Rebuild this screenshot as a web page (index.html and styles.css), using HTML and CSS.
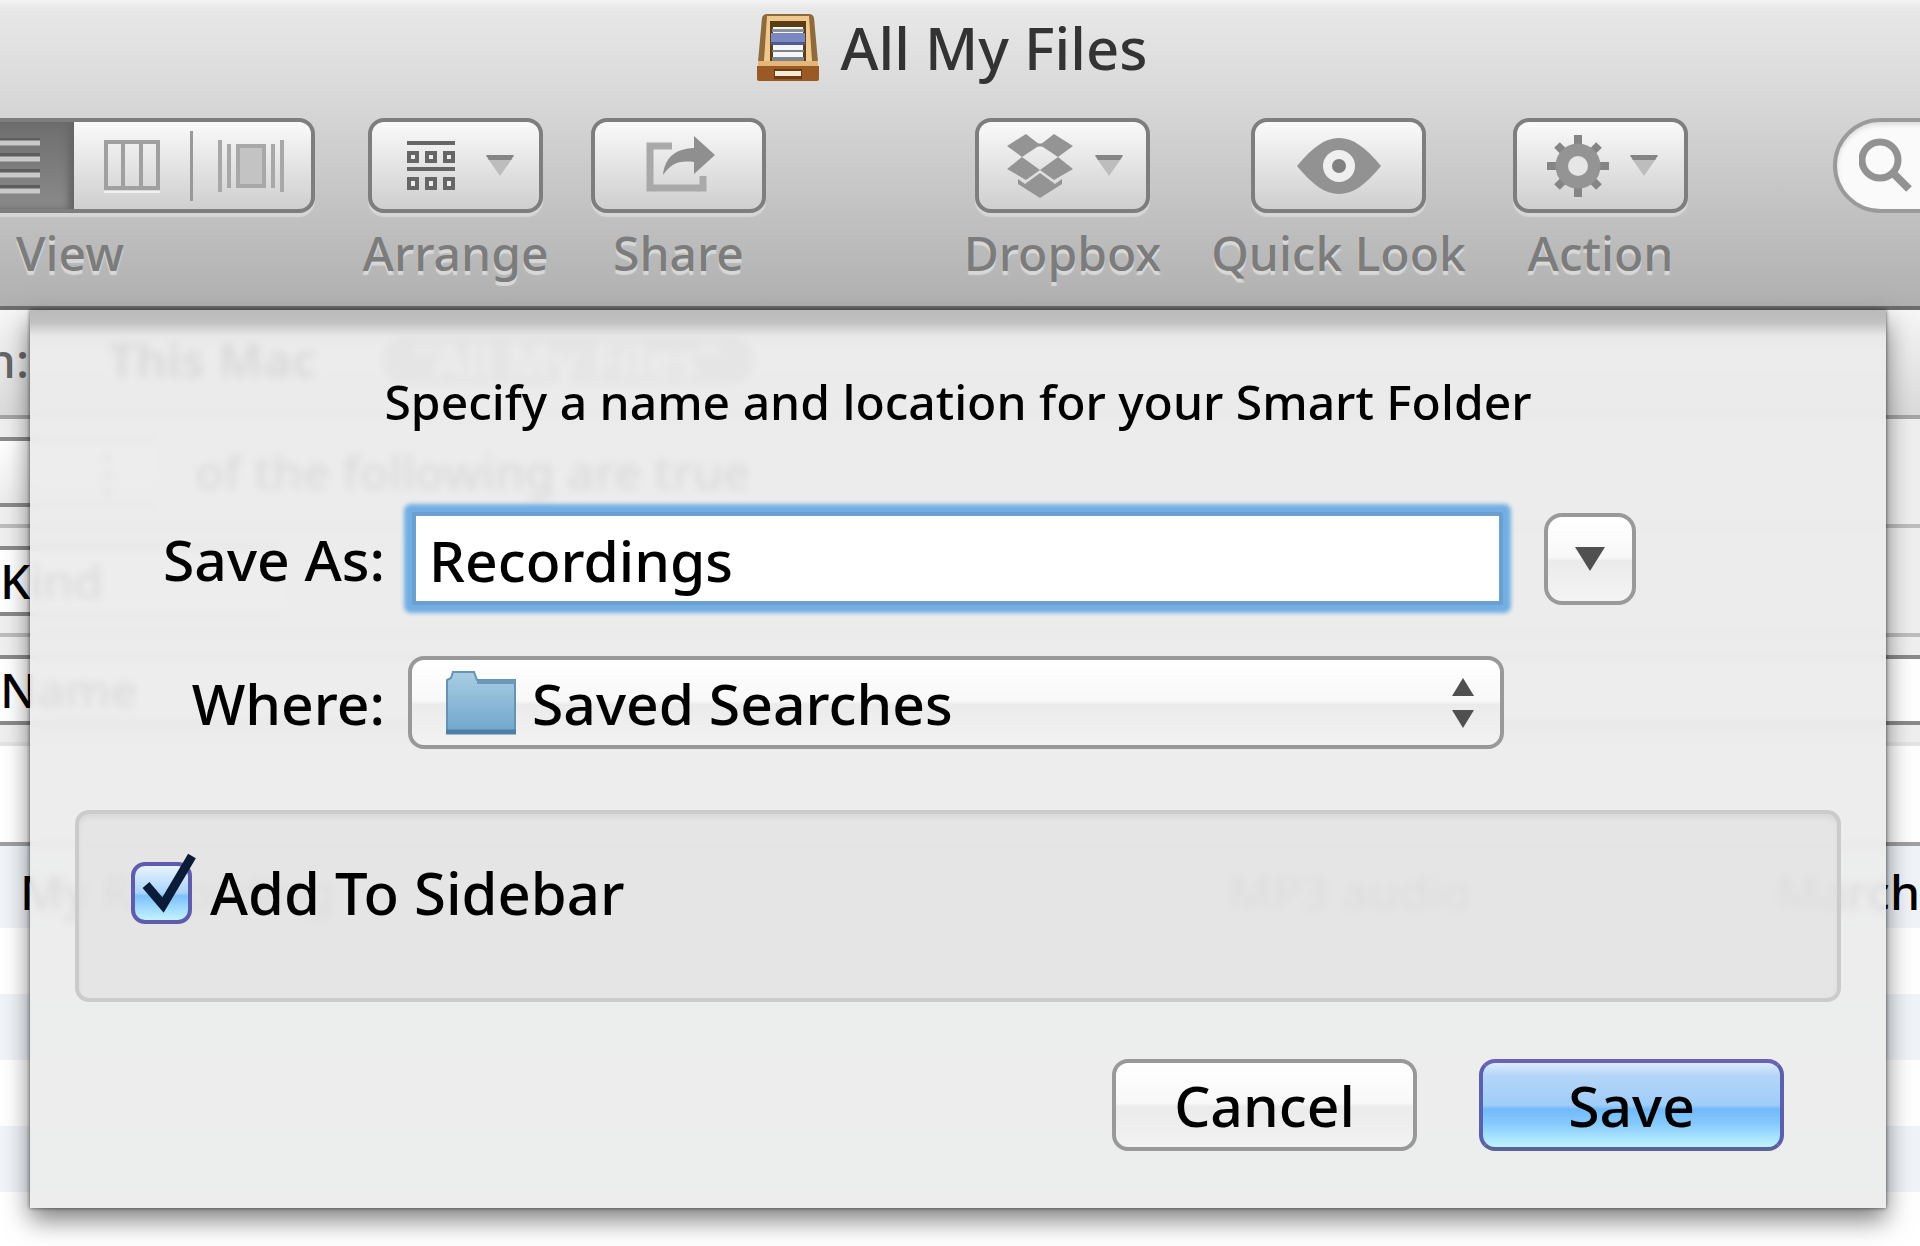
FILE: index.html
```html
<!DOCTYPE html>
<html lang="en">
<head>
<meta charset="utf-8">
<title>All My Files</title>
<link rel="stylesheet" href="styles.css">
</head>
<body>
<div class="window">
  <header class="header">
    <h1 class="title">
      <svg class="title-icon" width="62" height="68" viewBox="0 0 62 68" aria-hidden="true">
        <path d="M5 4Q6 0 10 0H52Q56 0 57 4L61 48H1Z" fill="#8f6a3c"/>
        <path d="M10 2H52L55 47H7Z" fill="#eec88c"/>
        <path d="M13 7H49V50H13Z" fill="#5c3d16"/>
        <path d="M16 13H46V47H16Z" fill="#f4f6f8"/>
        <path d="M15 15H47V18H15Z" fill="#8a9098"/>
        <path d="M14 19H48V28H14Z" fill="#7b87c0"/>
        <path d="M14 28H48V31H14Z" fill="#4f5b8c"/>
        <path d="M15 36H47V38H15ZM15 43H47V47H15Z" fill="#7d848c"/>
        <path d="M1 47H61V53H1Z" fill="#e5b777"/>
        <path d="M0 52H62V65Q62 67 60 67H2Q0 67 0 65Z" fill="#9a5a25"/>
        <path d="M17 55H45V65H17Z" fill="#6b3c12"/>
        <path d="M18 57H44V62H18Z" fill="#f5ead8"/>
      </svg>
      <span>All My Files</span>
    </h1>
    <div class="toolbar" role="toolbar" aria-label="Finder">
      <div class="tool tool-view">
        <div class="segments">
          <button class="segment" type="button" aria-label="Icons"></button>
          <button class="segment segment-on" type="button" aria-label="List">
            <svg width="56" height="56" viewBox="0 0 56 56"><path d="M0 1H56M0 17H56M0 33H56M0 49H56" stroke="#5e5e5e" stroke-width="4"/><path d="M0 5H56M0 21H56M0 37H56M0 53H56" stroke="#c9c9c9" stroke-width="5"/></svg>
          </button>
          <button class="segment segment-columns" type="button" aria-label="Columns">
            <svg width="58" height="56" viewBox="0 0 58 56"><path d="M3 4H55V50H3ZM20 4V50M38 4V50" fill="none" stroke="#a0a0a0" stroke-width="4"/><path d="M1 54H57" stroke="#f2f2f2" stroke-width="2"/></svg>
          </button>
          <button class="segment segment-ruled" type="button" aria-label="Cover Flow">
            <svg width="68" height="56" viewBox="0 0 68 56"><path d="M3 2V54M12 6V50M56 6V50M65 2V54" stroke="#a8a8a8" stroke-width="4"/><path d="M21 8H47V48H21Z" fill="#c3c3c3" stroke="#a8a8a8" stroke-width="4"/></svg>
          </button>
        </div>
        <span class="tool-label">View</span>
      </div>
      <div class="tool tool-arrange">
        <button class="tool-button" type="button" aria-label="Arrange">
          <svg width="48" height="52" viewBox="0 0 48 52"><path d="M0 3H48M0 29H48" stroke="#666" stroke-width="4"/><path d="M2 13H10V21H2ZM20 13H28V21H20ZM38 13H46V21H38ZM2 39H10V48H2ZM20 39H28V48H20ZM38 39H46V48H38Z" fill="#eee" stroke="#666" stroke-width="4"/></svg>
          <svg class="caret" width="30" height="24" viewBox="0 0 30 24"><path d="M1 2H29L15 22Z" fill="#bdbdbd"/><path d="M1 1H29L26 6H4Z" fill="#858585"/></svg>
        </button>
        <span class="tool-label">Arrange</span>
      </div>
      <div class="tool tool-share">
        <button class="tool-button" type="button" aria-label="Share">
          <svg width="74" height="60" viewBox="0 0 74 60"><path d="M30 10H8V52H61V40" fill="none" stroke="#a9a9a9" stroke-width="7"/><path d="M21 39C23 22 32 13 52 12V0L73 19L52 38V26C36 24 29 28 21 39Z" fill="#8f8f8f"/></svg>
        </button>
        <span class="tool-label">Share</span>
      </div>
      <div class="tool tool-dropbox">
        <button class="tool-button" type="button" aria-label="Dropbox">
          <svg width="68" height="66" viewBox="0 0 68 66"><path d="M20 1L34 12L16 24L1 13ZM48 1L67 13L52 24L34 12ZM16 24L34 37L20 47L1 36ZM52 24L67 36L48 47L34 37ZM34 40L49 51L56 46V51L34 65L12 51V46L19 51Z" fill="#949494"/><path d="M26 12H42" stroke="#949494" stroke-width="3"/></svg>
          <svg class="caret" width="30" height="24" viewBox="0 0 30 24"><path d="M1 2H29L15 22Z" fill="#bdbdbd"/><path d="M1 1H29L26 6H4Z" fill="#858585"/></svg>
        </button>
        <span class="tool-label">Dropbox</span>
      </div>
      <div class="tool tool-look">
        <button class="tool-button" type="button" aria-label="Quick Look">
          <svg width="84" height="56" viewBox="0 0 84 56"><path d="M0 28C16 9 28 0 42 0S68 9 84 28C68 47 56 56 42 56S16 47 0 28Z" fill="#929292"/><circle cx="42" cy="28" r="16" fill="#efefef"/><circle cx="42" cy="28" r="7" fill="#808080"/></svg>
        </button>
        <span class="tool-label">Quick Look</span>
      </div>
      <div class="tool tool-action">
        <button class="tool-button" type="button" aria-label="Action">
          <svg width="62" height="62" viewBox="-31 -31 62 62"><path d="M0 -31V31M-31 0H31M-21 -21L21 21M-21 21L21 -21" stroke="#858585" stroke-width="8"/><circle r="16" fill="none" stroke="#949494" stroke-width="13"/><circle r="10" fill="#e6e6e6"/></svg>
          <svg class="caret" width="30" height="24" viewBox="0 0 30 24"><path d="M1 2H29L15 22Z" fill="#bdbdbd"/><path d="M1 1H29L26 6H4Z" fill="#858585"/></svg>
        </button>
        <span class="tool-label">Action</span>
      </div>
      <label class="search">
        <svg width="56" height="56" viewBox="0 0 56 56" aria-hidden="true"><circle cx="21" cy="22" r="18" fill="none" stroke="#929292" stroke-width="7"/><path d="M34 35L50 51" stroke="#929292" stroke-width="8"/></svg>
        <input class="search-input" type="search" aria-label="Search">
      </label>
    </div>
  </header>

  <main class="content">
    <div class="browser">
      <div class="scope"><span class="scope-label">Search:</span><b>This Mac</b><span class="scope-pill">“All My Files”</span></div>
      <div class="rule"><span class="field field-any"><span>⋮</span></span><span>of the following are true</span></div>
      <div class="rule"><span class="field">Kind</span></div>
      <div class="rule rule-last"><span class="field field-wide">Name</span></div>
      <div class="columns"></div>
      <div class="row row-file"><span class="cell-name">My Recording</span><span class="cell-kind">MP3 audio</span><span class="cell-date">March</span></div>
      <div class="row"></div>
      <div class="row row-tint"></div>
      <div class="row"></div>
      <div class="row row-tint"></div>
    </div>

    <form class="sheet">
      <p class="prompt">Specify a name and location for your Smart Folder</p>
      <div class="fields">
        <label class="field-label" for="name">Save As:</label>
        <input class="name" id="name" type="text" value="Recordings">
        <button class="expand" type="button" aria-label="Show more locations">
          <svg width="32" height="24" viewBox="0 0 32 24"><path d="M1 0H31L16 24Z" fill="#505050"/></svg>
        </button>
        <label class="field-label" for="where">Where:</label>
        <div class="where">
          <svg class="folder" width="70" height="64" viewBox="0 0 70 64" aria-hidden="true">
            <defs><linearGradient id="folder" x1="0" y1="0" x2="0" y2="1"><stop offset="0" stop-color="#a9cde3"/><stop offset="1" stop-color="#70a6cb"/></linearGradient></defs>
            <path d="M1 62V9L5 7L7 1H28L31 9H69V62Z" fill="url(#folder)" stroke="#6593b3" stroke-width="2"/>
            <path d="M31 11H69" stroke="#6a98b8" stroke-width="4"/>
            <path d="M0 61H70" stroke="#4d7fa6" stroke-width="5"/>
          </svg>
          <select class="where-select" id="where"><option>Saved Searches</option></select>
          <svg class="updown" width="24" height="50" viewBox="0 0 24 50" aria-hidden="true"><path d="M12 0L23 18H1ZM12 50L1 32H23Z" fill="#505050"/></svg>
        </div>
      </div>
      <div class="options">
        <label class="check">
          <input class="check-box" type="checkbox" checked>
          <svg class="check-mark" width="56" height="60" viewBox="0 0 56 60" aria-hidden="true"><path d="M5 32L22 52L51 3" fill="none" stroke="#0b1c38" stroke-width="9"/></svg>
          <span>Add To Sidebar</span>
        </label>
      </div>
      <div class="actions">
        <button class="push" type="button">Cancel</button>
        <button class="push push-default" type="submit">Save</button>
      </div>
    </form>
  </main>
</div>
</body>
</html>
```
FILE: styles.css
```css
* { box-sizing: border-box; }

body {
  margin: 0;
  background: #fff;
  color: #000;
  font-family: "Noto Sans", "Open Sans", sans-serif;
  font-size: 48px;
  font-weight: 500;
  overflow: hidden;
}

button, input, select {
  font: inherit;
  color: inherit;
  margin: 0;
  padding: 0;
}

svg { display: block; flex: none; }

.window {
  display: flex;
  flex-direction: column;
  min-height: 100vh;
}

/* Title bar and toolbar */
.header {
  background: linear-gradient(#f4f4f4 0, #e8e8e8 8px, #d6d6d6 110px, #c2c2c2 210px, #b0b0b0 100%);
  border-bottom: 4px solid #6c6c6c;
  overflow: hidden;
}

.title {
  display: flex;
  justify-content: center;
  align-items: center;
  gap: 22px;
  height: 96px;
  margin: 0;
  padding-right: 16px;
  color: #333;
  font-size: 58px;
  font-weight: 500;
  line-height: 64px;
}

.toolbar {
  display: flex;
  align-items: flex-start;
  padding-top: 22px;
  height: 210px;
}

.tool {
  display: flex;
  flex: none;
  flex-direction: column;
  align-items: center;
  width: 175px;
}

.tool-view { width: 490px; margin-left: -175px; }
.tool-arrange { margin-left: 53px; }
.tool-share { margin-left: 48px; }
.tool-dropbox { margin-left: auto; }
.tool-look { margin-left: 101px; }
.tool-action { margin-left: 87px; }

.tool-label {
  margin-top: 10px;
  color: #7c7c7c;
  line-height: 60px;
  text-shadow: 0 4px 1px #d8d8d8;
  white-space: nowrap;
}

.segments, .tool-button {
  display: flex;
  width: 100%;
  height: 95px;
  border: 4px solid #7e7e7e;
  border-radius: 16px;
  background: linear-gradient(#fafafa, #e6e6e6 45%, #cfcfcf);
  box-shadow: 0 4px 1px #d6d6d6;
}

.tool-button {
  align-items: center;
  justify-content: center;
  gap: 30px;
}

.tool-button .caret { margin-right: -10px; }
.tool-dropbox .tool-button, .tool-action .tool-button { gap: 20px; }
.tool-dropbox .caret, .tool-action .caret { margin-right: -4px; }

.segments { overflow: hidden; }

.segment {
  display: flex;
  flex: 1;
  align-items: center;
  justify-content: center;
  border: 0;
  background: none;
}

.segment-on {
  flex: 0 0 127px;
  justify-content: flex-end;
  padding-right: 34px;
  background: linear-gradient(#6e6e6e, #8a8a8a);
  box-shadow: inset -6px 0 6px #666;
}

.segment-columns { flex: 0 0 116px; }

.segment-ruled {
  flex: 0 0 121px;
  background: linear-gradient(#999, #999) left center / 3px 70px no-repeat;
}

.search {
  display: flex;
  flex: none;
  align-items: center;
  width: 320px;
  height: 95px;
  margin-left: 145px;
  margin-right: -233px;
  padding-left: 22px;
  border: 4px solid #9a9a9a;
  border-radius: 48px;
  background: #fafafa;
  box-shadow: inset 0 3px 4px #ddd;
}

.search-input {
  width: 200px;
  border: 0;
  background: none;
}

/* Search criteria and file list behind the sheet */
.content {
  position: relative;
  flex: 1;
}

.browser { overflow: hidden; white-space: nowrap; }

.scope {
  display: flex;
  align-items: center;
  height: 109px;
  padding-bottom: 6px;
  border-bottom: 4px solid #a4a4a4;
  background: linear-gradient(#f6f6f6, #dadada);
}

.scope-label {
  display: flex;
  justify-content: flex-end;
  width: 29px;
  margin-right: 79px;
  color: #666;
}

.scope-pill {
  min-width: 370px;
  margin-left: 66px;
  border-radius: 24px;
  background: #888;
  color: #eee;
  font-weight: 700;
  line-height: 48px;
  text-align: center;
}

.rule {
  display: flex;
  align-items: center;
  height: 109px;
  border-bottom: 4px solid #bdbdbd;
  background: #efefef;
}

.rule-last { border-bottom-color: #e4e4e4; }

.field {
  display: flex;
  align-items: center;
  width: 280px;
  height: 70px;
  border: solid #8a8a8a;
  border-width: 4px 0;
  background: #fff;
}

.field-any {
  justify-content: flex-end;
  width: 155px;
  margin-right: 40px;
  padding-right: 24px;
  background: linear-gradient(#fff, #ececec);
}

.field-wide { width: 100%; }

.columns { height: 100px; border-bottom: 4px solid #a0a0a0; }

.row { display: flex; align-items: center; height: 66px; }
.row-tint { background: #f0f4f9; }
.row-file { height: 82px; padding: 8px 0 0 20px; background: #f0f4f9; }
.cell-name { width: 1215px; }
.cell-kind { width: 550px; }

/* Save sheet */
.sheet {
  position: absolute;
  top: 0;
  left: 30px;
  right: 34px;
  padding: 60px 45px 57px;
  background: linear-gradient(rgba(184, 184, 184, .95), rgba(188, 188, 188, .9) 12px, rgba(225, 225, 225, .4) 26px, rgba(236, 236, 236, 0) 40px), rgba(236, 236, 236, .93);
  box-shadow: 0 12px 24px rgba(0, 0, 0, .5), 0 0 4px rgba(0, 0, 0, .6);
  backdrop-filter: blur(4px);
}

.prompt {
  margin: 0;
  line-height: 64px;
  text-align: center;
}

.fields {
  display: grid;
  grid-template-columns: 310px 1fr 92px;
  column-gap: 23px;
  row-gap: 51px;
  align-items: center;
  margin-top: 78px;
  padding-right: 205px;
  font-size: 57px;
  line-height: 64px;
}

.field-label { text-align: right; }

.name {
  width: calc(100% - 22px);
  height: 93px;
  margin-left: 4px;
  padding: 2px 13px 0;
  border: 4px solid #6a9fce;
  border-radius: 2px;
  background: #fff;
  box-shadow: 0 0 4px 8px #72aee3;
  outline: 0;
}

.expand {
  display: flex;
  align-items: center;
  justify-content: center;
  height: 92px;
  border: 4px solid #999;
  border-radius: 18px;
  background: linear-gradient(#fff, #f8f8f8 48%, #ebebeb 52%, #f4f4f4);
}

.where {
  display: flex;
  align-items: center;
  width: calc(100% - 17px);
  height: 93px;
  padding: 0 25px 0 34px;
  border: 4px solid #999;
  border-radius: 16px;
  background: linear-gradient(#fff, #f8f8f8 48%, #ebebeb 52%, #f2f2f2);
}

.where-select {
  flex: 1;
  min-width: 0;
  margin-left: 16px;
  border: 0;
  background: none;
  appearance: none;
  outline: 0;
}

.options {
  height: 192px;
  margin-top: 61px;
  padding: 39px 52px;
  border: 4px solid #cbcbcb;
  border-radius: 14px;
  background: rgba(224, 224, 224, .6);
  box-shadow: inset 0 4px 4px #dadada;
}

.check {
  position: relative;
  display: inline-flex;
  align-items: center;
  gap: 18px;
  font-size: 58px;
  line-height: 80px;
}

.check-box {
  width: 61px;
  height: 62px;
  border: 4px solid #5f5cae;
  border-radius: 14px;
  background: linear-gradient(#e8f4ff, #a9d3fb 50%, #7cc0fb 55%, #c3f3ff);
  appearance: none;
}

.check-mark {
  position: absolute;
  left: 10px;
  top: 0;
}

.actions {
  display: flex;
  justify-content: flex-end;
  gap: 62px;
  margin-top: 57px;
  padding-right: 57px;
}

.push {
  width: 305px;
  height: 92px;
  border: 4px solid #999;
  border-radius: 16px;
  background: linear-gradient(#fff, #f8f8f8 48%, #ebebeb 52%, #f2f2f2);
  font-size: 57px;
  line-height: 64px;
}

.push-default {
  border-color: #6a62b4 #5a5fae #5b6296;
  background: linear-gradient(#dcecfd, #b4d5f8 15%, #a0cdf9 50%, #72b9fb 55%, #86cafc 72%, #c0f4ff);
}
```
